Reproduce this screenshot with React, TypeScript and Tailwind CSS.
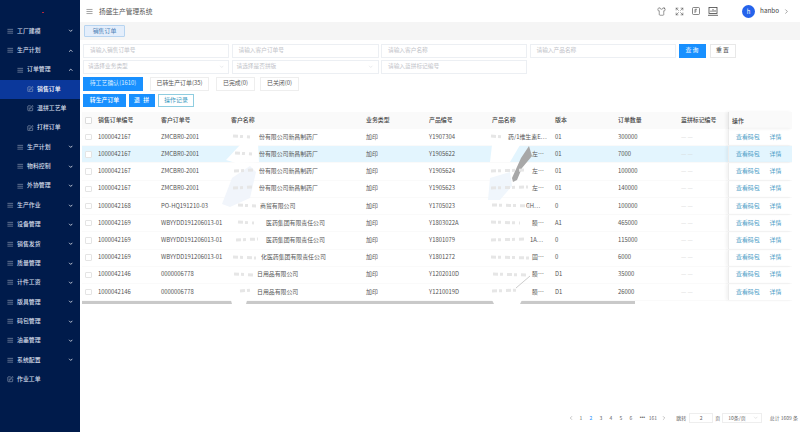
import { AlignJustify, ChevronDown, ChevronLeft, ChevronRight, ChevronUp, Expand, Shirt, SquarePen } from 'lucide-react';

type NavItem = {
  label: string;
  level: 0 | 1 | 2;
  icon?: 'menu' | 'edit';
  arrow?: 'up' | 'down';
  active?: boolean;
};

const navItems: NavItem[] = [
  { label: '工厂建模', level: 0, icon: 'menu', arrow: 'down' },
  { label: '生产计划', level: 0, icon: 'menu', arrow: 'up' },
  { label: '订单管理', level: 1, icon: 'menu', arrow: 'up' },
  { label: '销售订单', level: 2, icon: 'edit', active: true },
  { label: '温拼工艺单', level: 2, icon: 'edit' },
  { label: '打样订单', level: 2, icon: 'edit' },
  { label: '生产计划', level: 1, icon: 'menu', arrow: 'down' },
  { label: '物料控制', level: 1, icon: 'menu', arrow: 'down' },
  { label: '外协管理', level: 1, icon: 'menu', arrow: 'down' },
  { label: '生产作业', level: 0, icon: 'menu', arrow: 'down' },
  { label: '设备管理', level: 0, icon: 'menu', arrow: 'down' },
  { label: '销售发货', level: 0, icon: 'menu', arrow: 'down' },
  { label: '质量管理', level: 0, icon: 'menu', arrow: 'down' },
  { label: '计件工资', level: 0, icon: 'menu', arrow: 'down' },
  { label: '版具管理', level: 0, icon: 'menu', arrow: 'down' },
  { label: '码包管理', level: 0, icon: 'menu', arrow: 'down' },
  { label: '油墨管理', level: 0, icon: 'menu', arrow: 'down' },
  { label: '系统配置', level: 0, icon: 'menu', arrow: 'down' },
  { label: '作业工单', level: 0, icon: 'edit' },
];

const rows = [
  ['1000042167', 'ZMCBR0-2001', '份有限公司新昌制药厂', 'pl-[32px]', 'Y1907304', '药/1维生素E…', 'pl-[20px]', '01', '300000'],
  ['1000042167', 'ZMCBR0-2001', '份有限公司新昌制药厂', 'pl-[32px]', 'Y1905622', '左…', 'pl-[44px]', '01', '7000'],
  ['1000042167', 'ZMCBR0-2001', '份有限公司新昌制药厂', 'pl-[32px]', 'Y1905624', '左…', 'pl-[44px]', '01', '100000'],
  ['1000042167', 'ZMCBR0-2001', '份有限公司新昌制药厂', 'pl-[32px]', 'Y1905623', '左…', 'pl-[44px]', '01', '140000'],
  ['1000042168', 'PO-HQ191210-03', '商贸有限公司', 'pl-[33px]', 'Y1705023', 'CH…', 'pl-[38px]', '0', '100000'],
  ['1000042169', 'WBYYDD191206013-01', '医药集团有限责任公司', 'pl-[39px]', 'Y1803022A', '膜…', 'pl-[44px]', 'A1', '465000'],
  ['1000042169', 'WBYYDD191206013-01', '医药集团有限责任公司', 'pl-[39px]', 'Y1801079', '1A…', 'pl-[42px]', '0', '115000'],
  ['1000042169', 'WBYYDD191206013-01', '化医药集团有限责任公司', 'pl-[34px]', 'Y1801272', '固…', 'pl-[44px]', '0', '6000'],
  ['1000042146', '0000006778', '日用品有限公司', 'pl-[30px]', 'Y1202010D', '膜…', 'pl-[44px]', 'D1', '35000'],
  ['1000042146', '0000006778', '日用品有限公司', 'pl-[30px]', 'Y1210019D', '膜…', 'pl-[44px]', 'D1', '26000'],
];

const headers = ['销售订单编号', '客户订单号', '客户名称', '业务类型', '产品编号', '产品名称', '版本', '订单数量', '蓝拼标记编号'];

const gridCols = 'grid grid-cols-[12px_63px_70px_135px_63px_63px_63px_63px_63px_51px_64px]';

function Sidebar() {
  return (
    <aside className="flex h-full w-[80px] shrink-0 flex-col bg-[#001b4b] text-[5.9px] font-medium text-[#d5dbe8]">
      <div className="flex h-[21.5px] shrink-0 items-center justify-center pl-[5px] pt-[3px]">
        <div className="h-[1px] w-[2px] bg-[#b3263c]" />
      </div>
      {navItems.map((item, i) => (
        <div
          key={i}
          className={`flex h-[19.35px] shrink-0 items-center pr-[7px] ${item.active ? 'bg-[#0b389b] text-white' : ''} ${
            item.level === 0 ? 'pl-[7px]' : item.level === 1 ? 'pl-[17px]' : 'pl-[27px]'
          }`}
        >
          {item.icon === 'menu' ? (
            <AlignJustify size={6.5} strokeWidth={2} className="shrink-0 text-[#aeb6c8]" />
          ) : (
            <SquarePen size={6.5} strokeWidth={2} className="shrink-0 text-[#aeb6c8]" />
          )}
          <span className="ml-[3.5px] flex-1 whitespace-nowrap">{item.label}</span>
          {item.arrow === 'down' && <ChevronDown size={5.5} strokeWidth={3.5} className="text-[#e6e9f0]" />}
          {item.arrow === 'up' && <ChevronUp size={5.5} strokeWidth={3.5} className="text-[#e6e9f0]" />}
        </div>
      ))}
    </aside>
  );
}

function Topbar() {
  return (
    <header className="flex h-[22px] shrink-0 items-center bg-white pl-[6px] text-[#555]">
      <AlignJustify size={7} strokeWidth={2} className="text-[#666]" />
      <span className="ml-[6px] text-[6.7px]">扬盛生产管理系统</span>
      <div className="ml-auto flex items-center">
        <Shirt size={9} strokeWidth={1.4} className="text-[#444]" />
        <Expand size={9} strokeWidth={1.4} className="ml-[9px] text-[#444]" />
        <svg width="8" height="8" viewBox="0 0 8 8" fill="none" stroke="#555" strokeWidth="0.7" className="ml-[8.5px]">
          <rect x="0.5" y="0.5" width="7" height="7" rx="1" />
          <path d="M3 6V2.3h2M3 4h1.6" />
        </svg>
        <svg width="10" height="9" viewBox="0 0 10 9" fill="none" stroke="#444" strokeWidth="0.8" className="ml-[8px]">
          <rect x="1" y="0.5" width="8" height="6" />
          <path d="M0 8.3h10M3 5V3.5M5 5V2M7 5V3" />
        </svg>
        <div className="ml-[24px] flex h-[13px] w-[13px] items-center justify-center rounded-full bg-[#2563eb] text-[6px] text-white">h</div>
        <span className="ml-[5px] text-[6.3px] text-[#444]">hanbo</span>
        <ChevronRight size={7} strokeWidth={1.8} className="ml-[4px] mr-[10px] text-[#555]" />
      </div>
    </header>
  );
}

function Field({ text, select, width }: { text: string; select?: boolean; width: string }) {
  return (
    <div className={`flex h-[13.5px] items-center justify-between border border-[#eceff3] bg-white pr-[4px] text-[5.7px] text-[#bfc3c9] ${width} ${select ? 'pl-[4px]' : 'pl-[6px]'}`}>
      <span className="whitespace-nowrap">{text}</span>
      {select && <ChevronDown size={5.5} strokeWidth={1.5} className="text-[#c0c4cc]" />}
    </div>
  );
}

function Filters() {
  return (
    <div className="flex flex-col gap-[2.5px] pl-[3px] pt-[4px]">
      <div className="flex items-center gap-[2.5px]">
        <Field text="请输入销售订单号" width="w-[146px]" />
        <Field text="请输入客户订单号" width="w-[147px]" />
        <Field text="请输入客户名称" width="w-[146px]" />
        <Field text="请输入产品名称" width="w-[146px]" />
        <button className="ml-[1px] h-[13.5px] w-[27px] bg-[#1890ff] text-[5.9px] tracking-[1px] text-white">查询</button>
        <button className="ml-[1.5px] h-[13.5px] w-[26px] border border-[#e8e8e8] bg-white text-[5.9px] tracking-[1px] text-[#444]">重置</button>
      </div>
      <div className="flex items-center gap-[2.5px]">
        <Field text="请选择业务类型" select width="w-[146px]" />
        <Field text="请选择是否拼版" select width="w-[147px]" />
        <Field text="请输入蓝拼标记编号" width="w-[146px]" />
      </div>
    </div>
  );
}

function Tabs() {
  const base = 'flex h-[14px] items-center justify-center whitespace-nowrap text-[5.9px]';
  const idle = 'border border-[#eeeeee] bg-white text-[#555]';
  return (
    <div className="flex items-center pl-[3px] pt-[3px]">
      <div className={`${base} w-[60px] bg-[#1890ff] text-[#dbeeff]`}>待工艺确认(1610)</div>
      <div className={`${base} ${idle} ml-[7px] w-[59px]`}>已转生产订单(35)</div>
      <div className={`${base} ${idle} ml-[7px] w-[39px]`}>已完成(0)</div>
      <div className={`${base} ${idle} ml-[5px] w-[39px]`}>已关闭(0)</div>
    </div>
  );
}

function Actions() {
  const base = 'flex h-[13px] items-center justify-center whitespace-nowrap text-[5.9px]';
  return (
    <div className="flex items-center pl-[3px] pt-[3px]">
      <div className={`${base} w-[43px] bg-[#1890ff] font-medium text-white`}>转生产订单</div>
      <div className={`${base} ml-[3px] w-[26px] bg-[#1890ff] font-medium tracking-[1px] text-white`}>退 拼</div>
      <div className={`${base} ml-[3px] w-[36px] border border-[#8fcde0] bg-white text-[#3d9bc1]`}>操作记录</div>
    </div>
  );
}

function OrderTable() {
  return (
    <div className="relative ml-[2px] mt-[5px] w-[710px] text-[5.9px] text-[#555]">
      <div className={`${gridCols} h-[17.5px] items-center bg-[#fafafa] font-medium text-[#444]`}>
        <div className="flex justify-center pl-[1px]">
          <div className="h-[6.5px] w-[6.5px] shrink-0 rounded-[1px] border border-[#dcdcdc] bg-white" />
        </div>
        {headers.map((h) => (
          <div key={h} className="whitespace-nowrap pl-[4px]">{h}</div>
        ))}
        <div className="self-stretch border-l border-[#e4e4e4] pl-[3px] leading-[17.5px] shadow-[-2px_0_3px_rgba(0,0,0,0.06)]">操作</div>
      </div>
      {rows.map((r, i) => (
        <div key={i} className={`${gridCols} h-[17.22px] items-center border-b border-[#fafafa] ${i === 1 ? 'bg-[#e3f5fe]' : 'bg-white'}`}>
          <div className="flex justify-center pl-[1px]">
            <div className="h-[6.5px] w-[6.5px] shrink-0 rounded-[1px] border border-[#e4e4e4] bg-white" />
          </div>
          <div className="whitespace-nowrap pl-[4px]">{r[0]}</div>
          <div className="whitespace-nowrap pl-[4px]">{r[1]}</div>
          <div className={`whitespace-nowrap ${r[3]}`}>{r[2]}</div>
          <div className="pl-[4px]">加印</div>
          <div className="pl-[4px]">{r[4]}</div>
          <div className={`whitespace-nowrap ${r[6]}`}>{r[5]}</div>
          <div className="pl-[4px]">{r[7]}</div>
          <div className="pl-[4px]">{r[8]}</div>
          <div className="pl-[4px] text-[#d5d5d5]">— —</div>
          <div className="flex items-center self-stretch border-l border-[#ececec] pl-[7px] text-[#4b9cc6] shadow-[-2px_0_3px_rgba(0,0,0,0.05)]">
            <span>查看码包</span>
            <span className="ml-[10px]">详情</span>
          </div>
        </div>
      ))}
      <div className="h-[3px] w-[553px] bg-[#c9c9c9]" />
    </div>
  );
}

function Pagination() {
  const pages = ['1', '2', '3', '4', '5', '6'];
  return (
    <div className="mt-auto flex h-[28px] items-center justify-end text-[5px] text-[#666]">
      <ChevronLeft size={6} strokeWidth={1.5} />
      <div className="ml-[2px] flex">
        {pages.map((p) => (
          <span key={p} className={`w-[10px] text-center ${p === '2' ? 'text-[#1890ff]' : ''}`}>{p}</span>
        ))}
      </div>
      <span className="ml-[2px] w-[9px] text-center font-['Liberation_Sans',sans-serif]">•••</span>
      <span className="ml-[2px]">161</span>
      <ChevronRight size={6} strokeWidth={1.5} className="ml-[4px]" />
      <span className="ml-[9px]">跳转</span>
      <div className="ml-[3px] flex h-[10.5px] w-[24px] items-center justify-center border border-[#eeeeee]">2</div>
      <span className="ml-[2px]">页</span>
      <div className="ml-[2px] flex h-[10.5px] w-[40px] items-center justify-between border border-[#eeeeee] pl-[5px] pr-[3px]">
        <span>10条/页</span>
        <ChevronDown size={5.5} strokeWidth={1.3} className="text-[#aaa]" />
      </div>
      <span className="ml-[7.5px] mr-[2px] whitespace-nowrap">总计 1609 条</span>
    </div>
  );
}

// faint remains of the blurred-out names, row by row
const smudges = [
  [233, 136, 250, 137], [235, 153, 252, 154], [234, 171, 254, 170], [233, 188, 252, 187],
  [238, 205, 256, 206], [238, 222, 254, 223], [236, 240, 258, 239], [233, 257, 256, 258],
  [234, 274, 254, 275], [240, 291, 252, 290], [491, 171, 526, 170], [491, 188, 528, 187],
  [492, 205, 534, 206], [491, 222, 520, 223], [491, 240, 526, 239], [491, 257, 530, 258],
  [493, 274, 526, 275], [492, 291, 520, 290], [491, 136, 504, 137],
];

function Watermark() {
  return (
    <svg width="800" height="432" viewBox="0 0 800 432" className="pointer-events-none absolute left-0 top-0">
      <path d="M226 160L240 145L258 143L259 162L236 163Z" fill="#fff" />
      <path d="M222 204L232 178L250 166L256 172L250 198L230 207Z" fill="#f1f5fb" />
      <path d="M230 297L248 297L246 304L232 304Z" fill="#fff" />
      <path d="M490 162L492 145L520 145L510 162Z" fill="#fff" />
      <path d="M488 200L490 178L510 172L512 186L500 200Z" fill="#f0f6fc" />
      <path d="M512 178L521 158L529 146L532 156L522 168L517 180L513 182Z" fill="#a8a8a8" />
      <path d="M492 300L522 300L520 304L494 304Z" fill="#fff" />
      <path d="M516 288L530 276" stroke="#999" strokeWidth="0.5" />
      {smudges.map(([x1, y1, x2, y2], i) => (
        <path key={i} d={`M${x1} ${y1}L${x2} ${y2}`} stroke="#e6e6e6" strokeWidth="3" strokeDasharray="5 2 3 4" />
      ))}
    </svg>
  );
}

export default function App() {
  return (
    <div className="relative flex h-screen w-full overflow-hidden bg-white font-['Noto_Sans_CJK_SC','Noto_Sans',sans-serif]">
      <Sidebar />
      <main className="flex min-w-0 flex-1 flex-col">
        <Topbar />
        <div className="flex h-[18px] shrink-0 items-center bg-[#f5f5f5] pl-[4px]">
          <div className="flex h-[12.5px] w-[41px] items-center justify-center rounded-[1px] border border-[#b7d4f0] bg-[#e4eefb] text-[5.9px] text-[#4a7fb5]">销售订单</div>
        </div>
        <Filters />
        <Tabs />
        <Actions />
        <OrderTable />
        <Pagination />
      </main>
      <Watermark />
    </div>
  );
}
